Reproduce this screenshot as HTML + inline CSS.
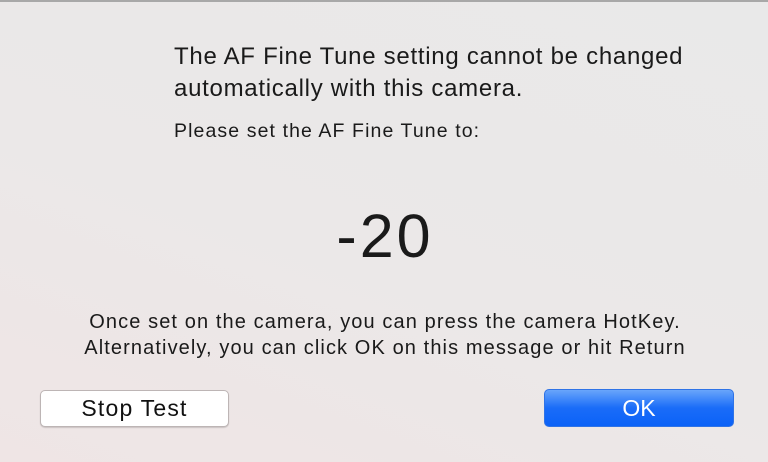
<!DOCTYPE html>
<html><head><style>
html,body{margin:0;padding:0}
body{width:768px;height:462px;overflow:hidden;position:relative;font-family:"Liberation Sans",sans-serif;color:#1a1a1a;
background:linear-gradient(20deg,#efe5e5 0%,#ebe8e8 45%,#e9e9e9 100%);}
.top{position:absolute;left:0;top:0;width:768px;height:2px;background:#a8a8a8}
.t{position:absolute;white-space:nowrap}
.btn{position:absolute;border-radius:5px;box-sizing:border-box;text-align:center;font-size:23px}
</style></head><body>
<div class="top"></div>
<div class="t" style="left:174px;top:41px;font-size:24px;line-height:32px;letter-spacing:0.72px">The AF Fine Tune setting cannot be changed<br>automatically with this camera.</div>
<div class="t" style="left:174px;top:120px;font-size:19.5px;letter-spacing:1.1px">Please set the AF Fine Tune to:</div>
<div class="t" style="left:0;width:770px;text-align:center;top:204px;font-size:61px;line-height:64px;letter-spacing:3px">-20</div>
<div class="t" style="left:0;width:770px;text-align:center;top:309px;font-size:20px;line-height:26px;letter-spacing:1.1px">Once set on the camera, you can press the camera HotKey.<br>Alternatively, you can click OK on this message or hit Return</div>
<div class="btn" style="left:40px;top:390px;width:189px;height:37px;background:#fff;border:1px solid #bdb5b5;box-shadow:0 1px 1px rgba(0,0,0,.15);line-height:35px;color:#111;letter-spacing:1.2px">Stop Test</div>
<div class="btn" style="left:544px;top:389px;width:190px;height:38px;background:linear-gradient(#69a5fb,#1a6cf8 50%,#0b62f7);border:1px solid #2f73e6;line-height:36px;color:#fff">OK</div>
</body></html>
